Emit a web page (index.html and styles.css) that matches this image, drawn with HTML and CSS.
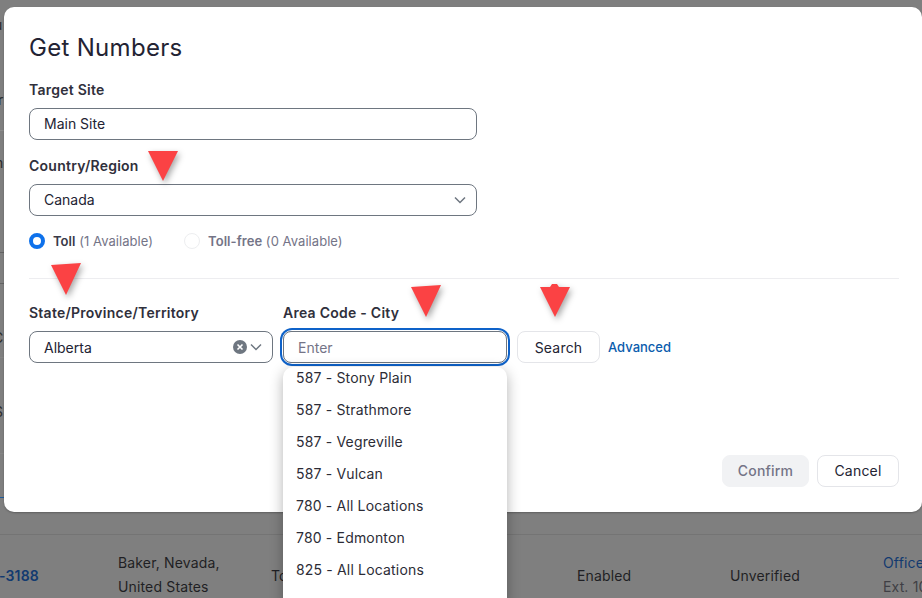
FILE: index.html
```html
<!DOCTYPE html>
<html lang="en">
<head>
<meta charset="utf-8">
<title>Get Numbers</title>
<link rel="stylesheet" href="styles.css">
</head>
<body>
<div class="page">
  <div class="stub s1"><span class="g g1">u</span><span class="g g2">r</span></div>
  <div class="stub s2"><span class="g g3">m</span></div>
  <div class="stub s3"></div>
  <div class="stub s4"><span class="g g4">C</span></div>
  <div class="stub s5"><span class="g g5">S</span></div>
  <div class="stub s6"></div>
  <div class="row">
    <span class="num">-3188</span>
    <span class="loc">Baker, Nevada,<br>United States</span>
    <span class="type">Toll</span>
    <span class="status">Enabled</span>
    <span class="verify">Unverified</span>
    <span class="office"><span class="office-name">Office</span><span class="ext">Ext. 10</span></span>
  </div>
</div>

<div class="modal">
  <h1 class="title">Get Numbers</h1>
  <label class="label">Target Site</label>
  <div class="field wide">Main Site</div>
  <label class="label second">Country/Region</label>
  <div class="field wide">Canada
    <svg class="chev" viewBox="0 0 12 8"><path d="M1 1.5l5 5 5-5"/></svg>
  </div>
  <div class="radios">
    <span class="radio on"></span><span class="radio-text"><b>Toll</b> (1 Available)</span>
    <span class="radio off"></span><span class="radio-text dim"><b>Toll-free</b> (0 Available)</span>
  </div>
  <hr class="rule">
  <div class="search-row">
    <div class="col state">
      <label class="label">State/Province/Territory</label>
      <div class="field low">Alberta
        <span class="clear"><svg viewBox="0 0 8 8"><path d="M1.5 1.5l5 5M6.5 1.5l-5 5"/></svg></span>
        <svg class="chev" viewBox="0 0 12 8"><path d="M1 1.5l5 5 5-5"/></svg>
      </div>
    </div>
    <div class="col area">
      <label class="label">Area Code - City</label>
      <div class="focus-ring"><div class="field placeholder">Enter</div></div>
    </div>
    <button class="btn search">Search</button>
    <a class="advanced">Advanced</a>
  </div>
  <div class="actions">
    <button class="btn confirm">Confirm</button>
    <button class="btn cancel">Cancel</button>
  </div>
</div>

<ul class="menu">
  <li>587 - Stony Plain</li>
  <li>587 - Strathmore</li>
  <li>587 - Vegreville</li>
  <li>587 - Vulcan</li>
  <li>780 - All Locations</li>
  <li>780 - Edmonton</li>
  <li>825 - All Locations</li>
</ul>

<svg class="arrow a1" viewBox="0 0 32 36"><polygon points="1,3 31,3 16,33"/></svg>
<svg class="arrow a2" viewBox="0 0 32 36"><polygon points="1,3 31,1 16,33"/></svg>
<svg class="arrow a3" viewBox="0 0 32 36"><polygon points="1,3 31,1 16,33"/></svg>
<svg class="arrow a4" viewBox="0 0 32 36"><polygon points="1,3 11,3 13,0 18,0 20,3 31,3 16,33"/></svg>
</body>
</html>
```

FILE: styles.css
```css
* { box-sizing: border-box; }
html, body { margin: 0; height: 100%; }
body {
  position: relative;
  width: 922px;
  height: 598px;
  overflow: hidden;
  background: #7f7f7f;
  font-family: Inter, "Liberation Sans", sans-serif;
  font-size: 14px;
  color: #232333;
}
.page { height: 598px; display: flex; flex-direction: column; }
.stub { display: flex; flex-direction: column; align-items: flex-start; color: #2b2b2b; }
.s1 { height: 131px; border-bottom: 1px solid #8c8c8c; }
.s2 { height: 122px; border-bottom: 1px solid #636363; }
.s3 { height: 31px; border-bottom: 1px solid #636363; }
.s4 { height: 74px; border-bottom: 1px solid #858585; }
.s5 { height: 96px; border-bottom: 1px solid #858585; }
.s6 { height: 44px; border-bottom: 1px solid #1d5c9b; margin-bottom: 36px; }
.g { line-height: 16px; }
.g1 { margin: 17px 0 0 -6px; }
.g2 { margin: 59px 0 0 -2px; }
.g3 { margin: 24px 0 0 -9px; }
.g4 { margin: 46px 0 0 -7px; }
.g5 { margin: 46px 0 0 -6px; }
.row {
  height: 64px;
  flex: none;
  border-top: 1px solid #747474;
  display: flex;
  align-items: center;
  color: #1f1f24;
  white-space: nowrap;
  overflow: hidden;
  letter-spacing: .15px;
}
.row > span { flex: none; }
.num { width: 119px; margin-left: -1px; padding-top: 18px; font-weight: 600; color: #123a70; }
.loc { width: 153px; line-height: 24px; padding-top: 16px; }
.type { width: 306px; padding-top: 17px; }
.status { width: 153px; padding-top: 17px; }
.verify { width: 153px; padding-top: 17px; }
.office { display: flex; flex-direction: column; line-height: 24px; padding-top: 16px; }
.office-name { color: #123a70; }
.ext { color: #3f3f45; }

.modal {
  position: absolute;
  left: 4px; top: 7px;
  width: 918px; height: 505px;
  background: #fff;
  border-radius: 10px;
  padding: 25px 25px 0;
  box-shadow: 0 1px 2px rgba(0,0,0,.25);
}
.title { margin: 0 0 18px; font-size: 24px; line-height: 32px; font-weight: 400; color: #232333; letter-spacing: .3px; }
.label { display: block; font-size: 14px; line-height: 16px; font-weight: 600; color: #30303c; margin-bottom: 10px; letter-spacing: .25px; }
.label.second { margin-top: 18px; }
.field {
  position: relative;
  height: 32px;
  border: 1px solid #6e7680;
  border-radius: 8px;
  padding: 0 14px;
  line-height: 30px;
  font-size: 14px;
  color: #232333;
  background: #fff;
}
.field.low { line-height: 32px; }
.wide { width: 448px; }
.chev { position: absolute; right: 10px; top: 11px; width: 12px; height: 8px; fill: none; stroke: #6e7680; stroke-width: 1.5; }
.radios { display: flex; align-items: center; height: 16px; margin-top: 17px; font-size: 13px; color: #747487; letter-spacing: .05px; }
.radio { width: 16px; height: 16px; border-radius: 50%; }
.radio.on { border: 4px solid #0e71eb; background: #fff; }
.radio.off { border: 1px solid #edeef0; margin-left: 31px; }
.radio-text { margin-left: 8px; }
.radio-text b { font-weight: 600; color: #3a3a48; }
.radio-text.dim b { color: #747487; }
.rule { border: 0; height: 1px; background: #ededf0; margin: 29px 0 0; width: 870px; }
.search-row { display: flex; align-items: flex-end; margin-top: 26px; }
.col .label { margin-bottom: 10px; }
.state { width: 244px; }
.area { width: 224px; margin-left: 10px; }
.clear {
  position: absolute; right: 25px; top: 8px;
  width: 14px; height: 14px; border-radius: 50%;
  background: #6e7680;
  display: flex; align-items: center; justify-content: center;
}
.clear svg { width: 8px; height: 8px; fill: none; stroke: #fff; stroke-width: 1.6; }
.focus-ring { border-radius: 9px; box-shadow: 0 0 0 1px #fff, 0 0 0 3px #0e62c9; }
.placeholder { color: #747487; border-radius: 8px; line-height: 31px; }
.btn {
  font-family: inherit;
  font-size: 14px;
  height: 32px;
  border-radius: 8px;
  background: #fff;
  border: 1px solid #e4e5e9;
  color: #232333;
  padding: 0;
  letter-spacing: .2px;
}
.search { width: 83px; margin-left: 10px; }
.advanced { margin: 0 0 1px 8px; font-size: 13px; line-height: 30px; font-weight: 500; color: #0b5cad; }
.actions { position: absolute; right: 23px; top: 448px; display: flex; gap: 8px; }
.confirm { width: 87px; padding-bottom: 1px; background: #f1f2f4; border-color: #f1f2f4; color: #747487; font-weight: 500; }
.cancel { width: 82px; padding-bottom: 1px; }

.menu {
  position: absolute;
  left: 283px; top: 367px;
  width: 224px; height: 240px;
  margin: 0; padding: 0;
  list-style: none;
  background: #fff;
  border-radius: 10px;
  box-shadow: 0 4px 14px rgba(0,0,0,.3);
  overflow: hidden;
}
.menu li { height: 32px; line-height: 32px; padding: 0 13px; color: #2c2c36; font-size: 14px; letter-spacing: .17px; position: relative; top: -5px; }

.arrow { position: absolute; width: 32px; height: 36px; fill: #fb4244; filter: drop-shadow(2px 3px 3px rgba(0,0,0,.35)); }
.a1 { left: 147px; top: 148px; }
.a2 { left: 50px; top: 262px; }
.a3 { left: 410px; top: 284px; }
.a4 { left: 539px; top: 284px; }
```
